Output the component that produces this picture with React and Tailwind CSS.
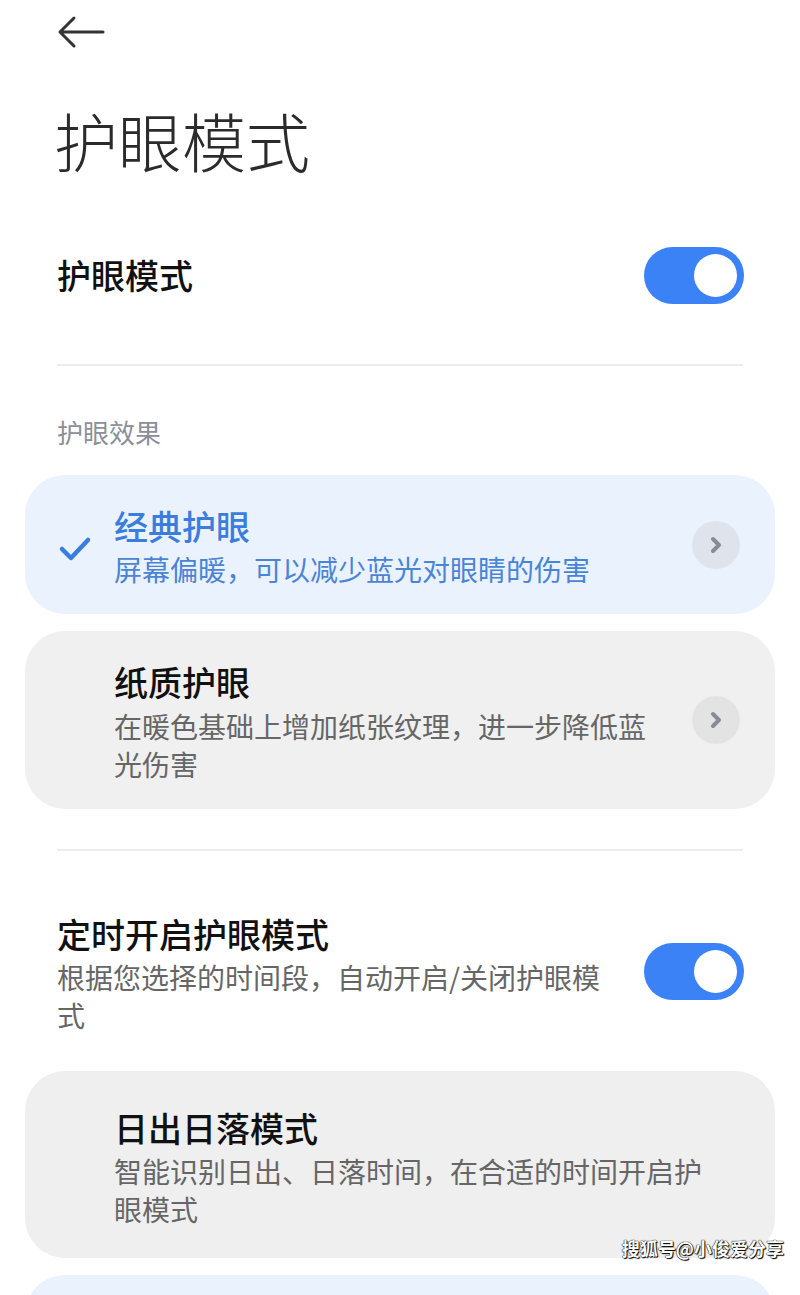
import React from 'react';

const font = { fontFamily: '"Noto Sans CJK SC", "Noto Sans", sans-serif' };

const Toggle = ({ className = '' }) => (
  <div className={`w-[100px] h-[57px] rounded-full bg-[#3b82f6] flex items-center justify-end pr-[7px] shrink-0 ${className}`}>
    <div className="w-[43px] h-[43px] rounded-full bg-white" />
  </div>
);

const Chevron = ({ bg }) => (
  <div className={`w-[48px] h-[48px] mb-[8px] rounded-full ${bg} flex items-center justify-center shrink-0`}>
    <svg width="14" height="20" viewBox="0 0 14 20" fill="none">
      <path d="M4 4l6 6-6 6" stroke="#868b94" strokeWidth="4" strokeLinecap="round" strokeLinejoin="round" />
    </svg>
  </div>
);

const App = () => {
  return (
    <div className="w-[800px] h-[1295px] bg-white overflow-hidden relative text-[#111]" style={font}>
      {/* back */}
      <div className="h-[64px] flex items-center pl-[57px]">
        <svg width="48" height="34" viewBox="0 0 48 34" fill="none">
          <path d="M46 17H3M17 3L3 17l14 14" stroke="#333" strokeWidth="3" strokeLinecap="round" strokeLinejoin="round" />
        </svg>
      </div>

      {/* title */}
      <div className="h-[150px] flex items-center pl-[54px]">
        <h1 className="text-[64px] leading-none font-light text-[#2b2b2b]">护眼模式</h1>
      </div>

      {/* main toggle */}
      <div className="h-[122px] flex items-center justify-between pl-[57px] pr-[56px]">
        <span className="text-[34px] leading-none font-medium">护眼模式</span>
        <Toggle />
      </div>

      <div className="mx-[57px] mt-[28px] h-[2px] bg-[#ececec]" />

      <div className="pl-[57px] pt-[53px] mb-[30px] text-[26px] leading-[26px] text-[#8b8f99]">护眼效果</div>

      {/* effect cards */}
      <div className="mx-[25px] flex flex-col gap-[17px]">
        <div className="rounded-[40px] bg-[#eaf2fe] pt-[34px] pb-[26px] pr-[35px] flex items-center">
          <div className="w-[89px] flex justify-center pl-[10px] shrink-0">
            <svg width="34" height="28" viewBox="0 0 34 28" fill="none">
              <path d="M4 14l9 9L30 5" stroke="#3b7ddd" strokeWidth="4.5" strokeLinecap="round" strokeLinejoin="round" />
            </svg>
          </div>
          <div className="flex-1">
            <div className="text-[34px] leading-[34px] font-medium text-[#3b7ddd]">经典护眼</div>
            <div className="mt-[7px] text-[28px] leading-[38px] text-[#4a84d6]">屏幕偏暖，可以减少蓝光对眼睛的伤害</div>
          </div>
          <Chevron bg="bg-[#dfe4ec]" />
        </div>

        <div className="rounded-[40px] bg-[#f0f0f0] pt-[34px] pb-[26px] pl-[89px] pr-[35px] flex items-center">
          <div className="flex-1">
            <div className="text-[34px] leading-[34px] font-medium">纸质护眼</div>
            <div className="mt-[8px] w-[550px] text-[28px] leading-[38px] text-[#666]">在暖色基础上增加纸张纹理，进一步降低蓝光伤害</div>
          </div>
          <Chevron bg="bg-[#e3e3e3]" />
        </div>
      </div>

      <div className="mx-[57px] mt-[40px] h-[2px] bg-[#ececec]" />

      {/* schedule */}
      <div className="pl-[57px] pr-[56px] pt-[66px] mb-[37px] flex items-start justify-between">
        <div>
          <div className="text-[34px] leading-[34px] font-medium">定时开启护眼模式</div>
          <div className="mt-[7px] w-[560px] text-[28px] leading-[38px] text-[#666]">根据您选择的时间段，自动开启/关闭护眼模式</div>
        </div>
        <Toggle className="mt-[26px]" />
      </div>

      <div className="mx-[25px] flex flex-col gap-[17px]">
        <div className="rounded-[40px] bg-[#efefef] pt-[40px] pb-[30px] pl-[89px]">
          <div className="text-[34px] leading-[34px] font-medium">日出日落模式</div>
          <div className="mt-[7px] w-[600px] text-[28px] leading-[38px] text-[#666]">智能识别日出、日落时间，在合适的时间开启护眼模式</div>
        </div>
        <div className="rounded-t-[40px] bg-[#eaf2fe] h-[120px]" />
      </div>

      <div className="absolute right-[16px] bottom-[38px] text-[18px] leading-none font-bold text-white [text-shadow:0_0_1px_#000,0_0_1px_#000,1px_1px_1px_#000]">
        搜狐号@小俊爱分享
      </div>
    </div>
  );
};

export default App;
